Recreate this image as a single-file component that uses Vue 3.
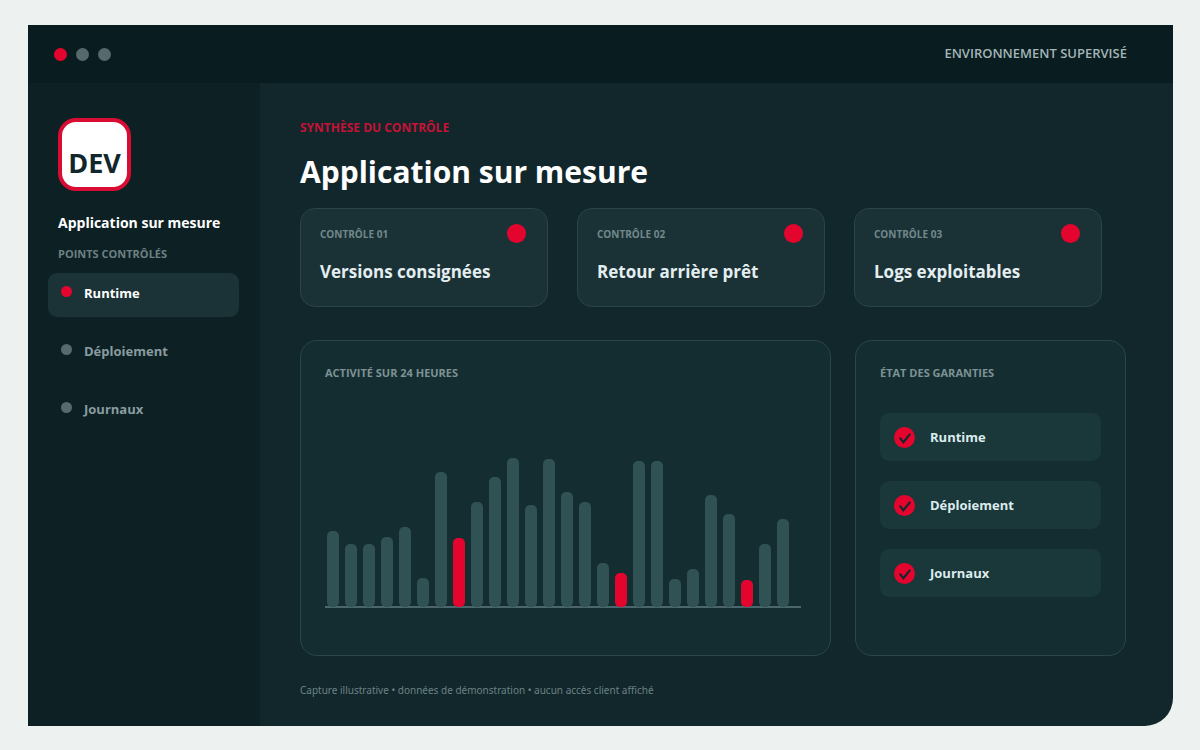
<script setup>
const points = [
  { name: 'Runtime', active: true },
  { name: 'Déploiement', active: false },
  { name: 'Journaux', active: false },
]

const controls = [
  { label: 'CONTRÔLE 01', title: 'Versions consignées' },
  { label: 'CONTRÔLE 02', title: 'Retour arrière prêt' },
  { label: 'CONTRÔLE 03', title: 'Logs exploitables' },
]

const activity = [
  76, 63, 63, 70, 80, 29, 135, 69, 105, 130, 149, 102, 148,
  115, 105, 44, 34, 146, 146, 28, 38, 112, 93, 27, 63, 88,
]
const alerts = [7, 16, 23]

const guarantees = ['Runtime', 'Déploiement', 'Journaux']
</script>

<template>
  <div class="page">
    <div class="window">
      <header class="topbar">
        <div class="lights">
          <span class="light red"></span>
          <span class="light"></span>
          <span class="light"></span>
        </div>
        <span class="env">ENVIRONNEMENT SUPERVISÉ</span>
      </header>

      <div class="body">
        <aside class="sidebar">
          <div class="logo">DEV</div>
          <p class="app-name">Application sur mesure</p>
          <p class="nav-title">POINTS CONTRÔLÉS</p>
          <nav class="nav">
            <a
              v-for="point in points"
              :key="point.name"
              href="#"
              class="nav-item"
              :class="{ active: point.active }"
            >
              <span class="bullet"></span>
              <span>{{ point.name }}</span>
            </a>
          </nav>
        </aside>

        <main class="main">
          <p class="eyebrow">SYNTHÈSE DU CONTRÔLE</p>
          <h1 class="title">Application sur mesure</h1>

          <section class="cards">
            <article v-for="control in controls" :key="control.label" class="card">
              <div class="card-head">
                <span class="card-label">{{ control.label }}</span>
                <span class="status"></span>
              </div>
              <h2 class="card-title">{{ control.title }}</h2>
            </article>
          </section>

          <section class="panels">
            <article class="panel">
              <h3 class="panel-title">ACTIVITÉ SUR 24 HEURES</h3>
              <div class="chart">
                <span
                  v-for="(value, i) in activity"
                  :key="i"
                  class="bar"
                  :class="{ alert: alerts.includes(i) }"
                  :style="{ height: value + 'px' }"
                ></span>
              </div>
            </article>

            <article class="panel">
              <h3 class="panel-title">ÉTAT DES GARANTIES</h3>
              <ul class="checks">
                <li v-for="item in guarantees" :key="item" class="check">
                  <svg class="tick" viewBox="0 0 22 22" aria-hidden="true">
                    <circle cx="11" cy="11" r="11" fill="#e4052f" />
                    <path d="M6 11.2 L9.8 16 L17 7.2" fill="none" stroke="#12272b" stroke-width="2.2" />
                  </svg>
                  <span>{{ item }}</span>
                </li>
              </ul>
            </article>
          </section>

          <p class="note">Capture illustrative • données de démonstration • aucun accès client affiché</p>
        </main>
      </div>
    </div>
  </div>
</template>

<style>
body {
  margin: 0;
  background: #edf2f0;
}
</style>

<style scoped>
.page {
  box-sizing: border-box;
  min-height: 100vh;
  padding: 25px 27px 24px 28px;
  display: flex;
  flex-direction: column;
  font-family: "Open Sans", "Noto Sans", sans-serif;
  font-weight: 700;
}

p, h1, h2, h3, ul {
  margin: 0;
  padding: 0;
}

.window {
  flex: 1;
  display: flex;
  flex-direction: column;
  overflow: hidden;
  border-radius: 0 0 28px 0;
  background: #12272b;
}

.topbar {
  display: flex;
  align-items: center;
  justify-content: space-between;
  height: 58px;
  padding: 0 46px 0 26px;
  background: #091c20;
}

.lights {
  display: flex;
  gap: 9px;
}

.light {
  width: 13px;
  height: 13px;
  border-radius: 50%;
  background: #56696c;
}

.light.red {
  background: #e4052f;
}

.env {
  padding-bottom: 2px;
  font-size: 13px;
  font-weight: 600;
  line-height: 18px;
  color: #a4b5b7;
}

.body {
  flex: 1;
  display: grid;
  grid-template-columns: 232px 1fr;
}

.sidebar {
  padding: 35px 21px 0 20px;
  background: #0d2125;
}

.logo {
  box-sizing: border-box;
  width: 73px;
  height: 73px;
  margin-left: 10px;
  padding-top: 19px;
  border: 4px solid #d90c33;
  border-radius: 18px;
  background: #fff;
  color: #12272b;
  font-size: 27px;
  line-height: 44px;
  text-align: center;
}

.app-name {
  margin: 22px 0 0 10px;
  font-size: 14px;
  line-height: 20px;
  color: #fff;
  white-space: nowrap;
}

.nav-title {
  margin: 13px 0 11px 10px;
  font-size: 11px;
  line-height: 16px;
  color: #6d8083;
}

.nav {
  display: flex;
  flex-direction: column;
  gap: 14px;
}

.nav-item {
  box-sizing: border-box;
  display: flex;
  align-items: center;
  gap: 12px;
  height: 44px;
  padding: 0 13px 4px;
  border-radius: 9px;
  font-size: 13px;
  line-height: 18px;
  color: #899c9f;
  text-decoration: none;
}

.nav-item.active {
  background: #1b3337;
  color: #fff;
}

.bullet {
  width: 11px;
  height: 11px;
  margin-bottom: 3px;
  border-radius: 50%;
  background: #566b6d;
}

.active .bullet {
  background: #e4052f;
}

.main {
  padding: 37px 47px 0 40px;
}

.eyebrow {
  font-size: 12px;
  line-height: 16px;
  color: #c51236;
}

.title {
  margin-top: 14px;
  font-size: 30px;
  line-height: 44px;
  color: #fff;
}

.cards {
  display: grid;
  grid-template-columns: repeat(3, 1fr);
  gap: 29px;
  margin: 14px 24px 0 0;
}

.card {
  box-sizing: border-box;
  height: 99px;
  padding: 15px 21px 0 19px;
  border: 1px solid #2a4448;
  border-radius: 15px;
  background: #1a3236;
}

.card-head {
  display: flex;
  align-items: center;
  justify-content: space-between;
}

.card-label {
  font-size: 10px;
  line-height: 16px;
  color: #72888b;
}

.status {
  width: 19px;
  height: 19px;
  border-radius: 50%;
  background: #e4052f;
}

.card-title {
  margin-top: 17px;
  font-size: 17px;
  line-height: 24px;
  color: #e4eef0;
}

.panels {
  display: grid;
  grid-template-columns: 531fr 271fr;
  gap: 24px;
  margin-top: 33px;
}

.panel {
  box-sizing: border-box;
  min-height: 316px;
  padding: 24px;
  border: 1px solid #2a4649;
  border-radius: 17px;
  background: #142d31;
}

.panel-title {
  font-size: 11px;
  line-height: 16px;
  color: #7d9294;
}

.chart {
  display: flex;
  align-items: flex-end;
  justify-content: space-between;
  height: 225px;
  margin-right: 5px;
  padding: 0 12px 0 2px;
  border-bottom: 2px solid #4b676b;
}

.bar {
  width: 12px;
  margin-bottom: -1px;
  border-radius: 5px;
  background: #305255;
}

.bar.alert {
  background: #e4052f;
}

.checks {
  display: grid;
  gap: 20px;
  margin-top: 32px;
  list-style: none;
}

.check {
  box-sizing: border-box;
  display: flex;
  align-items: center;
  gap: 15px;
  height: 48px;
  padding: 0 14px;
  border-radius: 9px;
  background: #1a373a;
  font-size: 13px;
  line-height: 18px;
  color: #dcebed;
}

.tick {
  width: 21px;
  height: 21px;
}

.note {
  margin-top: 26px;
  font-family: "Noto Sans", sans-serif;
  font-size: 10px;
  font-weight: 400;
  line-height: 16px;
  color: #6b8285;
}
</style>
